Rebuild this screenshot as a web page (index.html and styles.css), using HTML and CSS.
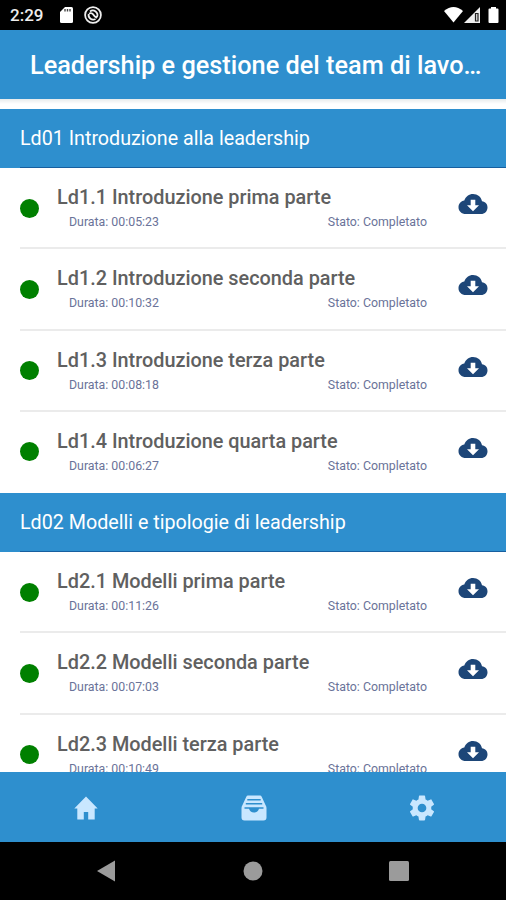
FILE: index.html
```html
<!DOCTYPE html>
<html lang="it">
  <head>
    <meta charset="UTF-8" />
    <meta name="viewport" content="width=device-width, initial-scale=1.0" />
    <title>Leadership e gestione del team di lavoro</title>
    <link rel="stylesheet" href="styles.css">
  </head>
  <body>
    <svg class="sprite" width="0" height="0">
      <symbol id="cloud" viewBox="0 0 30 22">
        <path d="M8 21C3.500 21 .5 18 .5 14.200c0-3.500 2.400-6 5.800-6.700C7.700 3.500 11 1 15 1c4.600 0 8.200 3 9 7.300 3.300.3 5.500 2.900 5.500 6.100 0 3.700-2.800 6.600-6.500 6.600z" fill="#1d4678" />
        <path d="M12.700 6.700h4.600v5.600h3.700L15 18.200 9 12.300h3.700z" fill="#fff" />
      </symbol>
    </svg>

    <div class="status-bar">
      <span class="clock">2:29</span>
      <svg class="sd" width="13" height="16" viewBox="0 0 13 16">
        <path d="M5 0h6.500Q13 0 13 1.500v13q0 1.500-1.500 1.500h-10Q0 16 0 14.500V5z" fill="#fff" />
        <path d="M5 2v2.500M7.500 2v2.500M10 2v2.500" stroke="#444" stroke-width="1.400" />
      </svg>
      <svg class="sync" width="18" height="18" viewBox="0 0 18 18" fill="none" stroke="#eee">
        <circle cx="9" cy="9" r="7.900" stroke-width="1.800" />
        <path d="M6 5.500A4.600 4.600 0 0 1 13 11M11.500 13A4.600 4.600 0 0 1 4.700 8M5 7.500q3-1 4 .8t4 3.700" stroke-width="1.800" />
      </svg>
      <svg class="signals" width="56" height="18" viewBox="0 0 56 18" fill="#fff">
        <path d="M0 5Q9.500-3 19 5L9.500 16.500z" />
        <path d="M20 17L36 1v16z" fill="#eee" />
        <path d="M31.500 7.500h2.500v7.500h-2.500z" fill="#ddd" stroke="#222" stroke-width="1.200" />
        <path d="M47 1h5v1.500h1.500q1 0 1 1V16q0 1-1 1h-8q-1 0-1-1V3.500q0-1 1-1H47z" />
      </svg>
    </div>

    <header class="title-bar">
      <h1>Leadership e gestione del team di lavo…</h1>
    </header>

    <main class="lessons">
      <h2>Ld01 Introduzione alla leadership</h2>
      <ul>
        <li>
          <span class="dot"></span>
          <div class="info">
            <h3>Ld1.1 Introduzione prima parte</h3>
            <p><span>Durata: 00:05:23</span><span>Stato: Completato</span></p>
          </div>
          <svg class="cloud"><use href="#cloud" /></svg>
        </li>
        <li>
          <span class="dot"></span>
          <div class="info">
            <h3>Ld1.2 Introduzione seconda parte</h3>
            <p><span>Durata: 00:10:32</span><span>Stato: Completato</span></p>
          </div>
          <svg class="cloud"><use href="#cloud" /></svg>
        </li>
        <li>
          <span class="dot"></span>
          <div class="info">
            <h3>Ld1.3 Introduzione terza parte</h3>
            <p><span>Durata: 00:08:18</span><span>Stato: Completato</span></p>
          </div>
          <svg class="cloud"><use href="#cloud" /></svg>
        </li>
        <li>
          <span class="dot"></span>
          <div class="info">
            <h3>Ld1.4 Introduzione quarta parte</h3>
            <p><span>Durata: 00:06:27</span><span>Stato: Completato</span></p>
          </div>
          <svg class="cloud"><use href="#cloud" /></svg>
        </li>
      </ul>
      <h2>Ld02 Modelli e tipologie di leadership</h2>
      <ul>
        <li>
          <span class="dot"></span>
          <div class="info">
            <h3>Ld2.1 Modelli prima parte</h3>
            <p><span>Durata: 00:11:26</span><span>Stato: Completato</span></p>
          </div>
          <svg class="cloud"><use href="#cloud" /></svg>
        </li>
        <li>
          <span class="dot"></span>
          <div class="info">
            <h3>Ld2.2 Modelli seconda parte</h3>
            <p><span>Durata: 00:07:03</span><span>Stato: Completato</span></p>
          </div>
          <svg class="cloud"><use href="#cloud" /></svg>
        </li>
        <li>
          <span class="dot"></span>
          <div class="info">
            <h3>Ld2.3 Modelli terza parte</h3>
            <p><span>Durata: 00:10:49</span><span>Stato: Completato</span></p>
          </div>
          <svg class="cloud"><use href="#cloud" /></svg>
        </li>
      </ul>
    </main>

    <nav class="tabs">
      <svg width="24" height="24" viewBox="0 0 24 24">
        <path d="M12 .5L.3 12.500H3.300v11H9.800V16h4.400v7.500h6.500v-11h3z" />
      </svg>
      <svg width="26" height="26" viewBox="0 0 26 26">
        <path d="M7 .5h12q1.200 0 1.700 1.200L24.500 10q1 1.500 1 3v9.500q0 3-3 3h-19q-3 0-3-3V13q0-1.500 1-3L5.300 1.700Q5.800.5 7 .5z" />
        <path class="cut" d="M6.300 4h13.400v1.500H6.300zM4.800 8h16.400v1.600H4.800zM3.500 12.300h19v1.500h-4.500Q17 17.500 13 17.500T8 13.800H3.500z" />
      </svg>
      <svg width="26" height="26" viewBox="1.500 1.500 21 21">
        <path fill-rule="evenodd" d="M19.430 12.980c.04-.32.07-.64.07-.98s-.03-.66-.07-.98l2.110-1.650c.19-.15.24-.42.12-.64l-2-3.460c-.12-.22-.39-.3-.61-.22l-2.490 1c-.52-.4-1.080-.73-1.690-.98l-.38-2.650A.488.488 0 0 0 14 2h-4c-.25 0-.46.18-.49.42l-.38 2.650c-.61.25-1.170.59-1.690.98l-2.490-1c-.23-.09-.49 0-.61.22l-2 3.460c-.13.22-.07.49.12.64l2.110 1.650c-.04.32-.07.65-.07.98s.03.66.07.98l-2.110 1.650c-.19.15-.24.42-.12.64l2 3.460c.12.22.39.3.61.22l2.490-1c.52.4 1.080.73 1.690.98l.38 2.650c.03.24.24.42.49.42h4c.25 0 .46-.18.49-.42l.38-2.650c.61-.25 1.170-.59 1.690-.98l2.490 1c.23.09.49 0 .61-.22l2-3.460c.12-.22.07-.49-.12-.64zM12 15.500A3.500 3.500 0 1 1 12 8.500a3.500 3.500 0 0 1 0 7z" />
      </svg>
    </nav>

    <footer class="system-nav">
      <svg width="20" height="22" viewBox="0 0 20 22"><path d="M1 11L19 .5v21z" /></svg>
      <svg width="20" height="20" viewBox="0 0 20 20"><circle cx="10" cy="10" r="9.500" /></svg>
      <svg width="20" height="20" viewBox="0 0 20 20"><rect width="20" height="20" rx="1.500" /></svg>
    </footer>
  </body>
</html>
```

FILE: styles.css
```css
* {
  box-sizing: border-box;
}

body {
  margin: 0;
  height: 900px;
  display: flex;
  flex-direction: column;
  overflow: hidden;
  font-family: Roboto, sans-serif;
  background: #fff;
}

h1,
h2,
h3,
p,
ul {
  margin: 0;
  padding: 0;
  font-weight: 400;
}

.sprite {
  position: absolute;
}

.status-bar {
  flex: 0 0 30px;
  display: flex;
  align-items: center;
  padding: 0 6px 0 10px;
  background: #000;
  color: #eee;
}

.clock {
  width: 50px;
  font-size: 17px;
  font-weight: 500;
}

.sync {
  margin-left: 11px;
}

.signals {
  margin-left: auto;
}

.title-bar {
  flex: 0 0 69px;
  padding: 0 20px 0 30px;
  background: #2e8fce;
  color: #fff;
}

.title-bar h1 {
  height: 69px;
  font-size: 25.300px;
  font-weight: 500;
  line-height: 72px;
  white-space: nowrap;
}

.lessons {
  flex: 1;
  min-height: 0;
  overflow: hidden;
  padding-top: 10px;
  background: linear-gradient(#e8ebeb, #fff 5px);
}

h2 {
  height: 59px;
  padding-left: 20px;
  background: linear-gradient(#175f9f, #175f9f) 20px 100% / 100% 1px no-repeat #2e8fce;
  color: #fff;
  font-size: 19.700px;
  line-height: 59px;
}

ul {
  list-style: none;
}

li {
  display: flex;
  height: 81.300px;
  margin-left: 20px;
  border-bottom: 2px solid #ebebeb;
}

li:last-child {
  border-bottom: none;
}

.dot {
  width: 19px;
  height: 19px;
  margin-top: 30.500px;
  border-radius: 50%;
  background: #008000;
}

.info {
  width: 370px;
  margin: 18px 0 0 18px;
}

h3 {
  color: #606060;
  font-size: 19.850px;
  font-weight: 500;
  line-height: 24px;
}

.info p {
  display: flex;
  justify-content: space-between;
  padding-left: 12px;
  color: #6a7399;
  font-size: 12.350px;
  line-height: 25px;
}

.cloud {
  width: 30px;
  height: 22px;
  margin: 25px 0 0 31px;
}

.tabs {
  flex: 0 0 70px;
  display: grid;
  grid-template-columns: repeat(3, 1fr);
  place-items: center;
  padding: 2px 0 0 2px;
  background: #2e8fce;
  fill: #c9e7ff;
}

.tabs .cut {
  fill: #2e8fce;
}

.system-nav {
  flex: 0 0 58px;
  display: flex;
  justify-content: space-between;
  align-items: center;
  padding: 0 97px 0 96px;
  background: #000;
  fill: #9b9b9b;
}
```
